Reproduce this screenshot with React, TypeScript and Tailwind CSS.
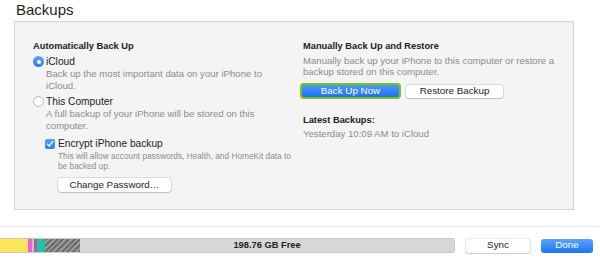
import React from 'react';

const font = { fontFamily: '"Liberation Sans", Arial, sans-serif' };

const Radio = ({ checked }: { checked?: boolean }) =>
  checked ? (
    <span className="w-[11px] h-[11px] rounded-full bg-gradient-to-b from-[#5aa2fa] to-[#2a7cf4] flex items-center justify-center shrink-0">
      <span className="w-[4px] h-[4px] rounded-full bg-white" />
    </span>
  ) : (
    <span className="w-[11px] h-[11px] rounded-full bg-white border border-[#b9b9b9] shrink-0" />
  );

const Checkbox = () => (
  <span className="w-[10px] h-[10px] rounded-[2px] bg-gradient-to-b from-[#5aa2fa] to-[#2a7cf4] flex items-center justify-center shrink-0">
    <svg width="8" height="8" viewBox="0 0 8 8">
      <path d="M1.5 4.2 L3.2 6 L6.6 1.6" fill="none" stroke="white" strokeWidth="1.3" strokeLinecap="round" strokeLinejoin="round" />
    </svg>
  </span>
);

const btn = 'bg-white rounded-[3px] shadow-[0_0_0_0.5px_rgba(0,0,0,0.2),0_1px_1px_rgba(0,0,0,0.12)] text-[9.8px] text-[#222] flex items-center justify-center';

const App: React.FC = () => {
  return (
    <div className="w-[600px] h-[259px] bg-white overflow-hidden flex flex-col text-[#222]" style={font}>
      <h1 className="pl-[16px] pt-[1px] h-[21px] text-[15px] leading-[18px] text-[#1d1d1d]">Backups</h1>

      <div className="ml-[14px] w-[560px] h-[189px] bg-[#f4f4f4] border border-[#d6d6d6] shadow-[inset_0_1px_1px_rgba(0,0,0,0.04)] flex">
        {/* left column */}
        <div className="w-[287px] pl-[18px] pt-[18px] flex flex-col">
          <div className="text-[9.3px] leading-[12px] font-bold">Automatically Back Up</div>
          <div className="mt-[3px] flex items-center gap-[2px] h-[13px]">
            <Radio checked />
            <span className="text-[10.2px]">iCloud</span>
          </div>
          <div className="pl-[13px] text-[9.6px] leading-[12px] text-[#8c8c8c]">
            Back up the most important data on your iPhone to<br />iCloud.
          </div>
          <div className="mt-[3px] flex items-center gap-[2px] h-[13px]">
            <Radio />
            <span className="text-[10.2px]">This Computer</span>
          </div>
          <div className="pl-[13px] text-[9.6px] leading-[12px] text-[#8c8c8c]">
            A full backup of your iPhone will be stored on this<br />computer.
          </div>
          <div className="pl-[12px] mt-[5px] flex items-center gap-[3px] h-[14px]">
            <Checkbox />
            <span className="text-[10.2px]">Encrypt iPhone backup</span>
          </div>
          <div className="pl-[25px] text-[8.3px] leading-[10px] text-[#8c8c8c]">
            This will allow account passwords, Health, and HomeKit data to<br />be backed up.
          </div>
          <div className="pl-[25px] mt-[7px]">
            <button className={`w-[113px] h-[14px] ${btn}`}>Change Password…</button>
          </div>
        </div>

        {/* right column */}
        <div className="flex-1 pt-[18px] pl-[1px] flex flex-col">
          <div className="text-[9.3px] leading-[12px] font-bold">Manually Back Up and Restore</div>
          <div className="mt-[3px] text-[9.6px] leading-[11px] text-[#8c8c8c]">
            Manually back up your iPhone to this computer or restore a<br />backup stored on this computer.
          </div>
          <div className="mt-[6px] -ml-[3px] flex items-center gap-[5px]">
            <div className="w-[101px] h-[16px] rounded-[4px] bg-[#7bc31a] p-[2px] flex">
              <button className="flex-1 rounded-[2px] bg-gradient-to-b from-[#4b98fb] to-[#1f6ff0] text-white text-[9.8px] flex items-center justify-center">
                Back Up Now
              </button>
            </div>
            <button className={`w-[97px] h-[13px] ${btn}`}>Restore Backup</button>
          </div>
          <div className="mt-[15px] text-[9.3px] leading-[12px] font-bold">Latest Backups:</div>
          <div className="mt-[2px] text-[9.6px] leading-[12px] text-[#8c8c8c]">Yesterday 10:09 AM to iCloud</div>
        </div>
      </div>

      <div className="mt-[16px] h-px bg-[#e6e6e6]" />

      <div className="mt-[11px] flex items-center">
        <div className="w-[455px] h-[15px] flex border-y border-r border-[#c9c9c9] rounded-r-[2px] overflow-hidden">
          <div className="w-[28px] bg-[#fde65b]" />
          <div className="w-[4px] bg-[#f25ce9]" />
          <div className="w-[2px] bg-[#a8e27a]" />
          <div className="w-[3px] bg-[#c44bcf]" />
          <div className="w-[8px] bg-[#22c49a]" />
          <div className="w-[35px] bg-[repeating-linear-gradient(135deg,#6e6e6e_0px,#6e6e6e_2px,#9a9a9a_2px,#9a9a9a_4px)]" />
          <div className="flex-1 bg-[#d7d7d7] flex items-center justify-center text-[9.3px] font-bold text-[#222]">
            198.76 GB Free
          </div>
        </div>
        <button className={`ml-[11px] w-[64px] h-[14px] ${btn}`}>Sync</button>
        <button className="ml-[11px] w-[52px] h-[14px] rounded-[3px] bg-gradient-to-b from-[#59a3fb] to-[#1f74f2] text-white text-[9.8px] flex items-center justify-center">
          Done
        </button>
      </div>
    </div>
  );
};

export default App;
